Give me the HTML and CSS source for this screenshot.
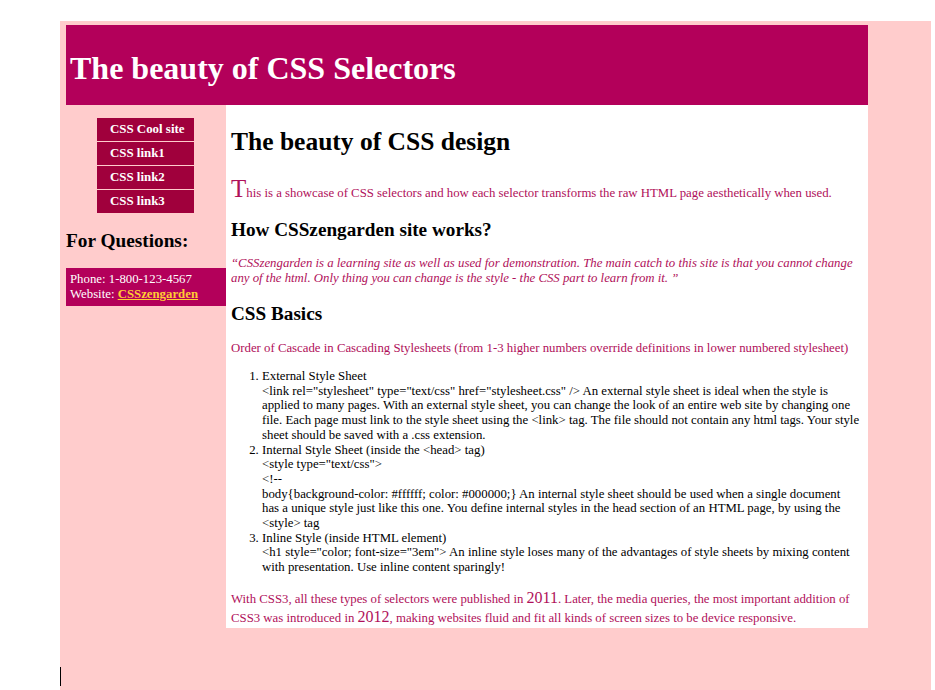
FILE: index.html
```html
<!DOCTYPE html>
<html>
<head>
<meta charset="utf-8">
<title>The beauty of CSS Selectors</title>
<link rel="stylesheet" href="styles.css">
</head>
<body>
<div class="page">
  <header class="masthead">
    <h1 class="site-title">The beauty of CSS Selectors</h1>
  </header>
  <div class="layout">
    <aside class="sidebar">
      <nav class="nav">
        <a class="nav-link" href="#">CSS Cool site</a>
        <a class="nav-link" href="#">CSS link1</a>
        <a class="nav-link" href="#">CSS link2</a>
        <a class="nav-link" href="#">CSS link3</a>
      </nav>
      <h2 class="side-heading">For Questions:</h2>
      <div class="contact">
        Phone: 1-800-123-4567<br>
        Website: <a class="contact-link" href="#">CSSzengarden</a>
      </div>
    </aside>
    <main class="content">
      <h1 class="content-title">The beauty of CSS design</h1>
      <p class="intro"><span class="dropcap">T</span>his is a showcase of CSS selectors and how each selector transforms the raw HTML page aesthetically when used.</p>
      <h2 class="section-title">How CSSzengarden site works?</h2>
      <p class="quote">“CSSzengarden is a learning site as well as used for demonstration. The main catch to this site is that you cannot change any of the html. Only thing you can change is the style - the CSS part to learn from it. ”</p>
      <h2 class="section-title">CSS Basics</h2>
      <p class="lead">Order of Cascade in Cascading Stylesheets (from 1-3 higher numbers override definitions in lower numbered stylesheet)</p>
      <ol class="cascade">
        <li>External Style Sheet<br>&lt;link rel="stylesheet" type="text/css" href="stylesheet.css" /&gt; An external style sheet is ideal when the style is applied to many pages. With an external style sheet, you can change the look of an entire web site by changing one file. Each page must link to the style sheet using the &lt;link&gt; tag. The file should not contain any html tags. Your style sheet should be saved with a .css extension.</li>
        <li>Internal Style Sheet (inside the &lt;head&gt; tag)<br>&lt;style type="text/css"&gt;<br>&lt;!--<br>body{background-color: #ffffff; color: #000000;} An internal style sheet should be used when a single document has a unique style just like this one. You define internal styles in the head section of an HTML page, by using the &lt;style&gt; tag</li>
        <li>Inline Style (inside HTML element)<br>&lt;h1 style="color; font-size="3em"&gt; An inline style loses many of the advantages of style sheets by mixing content with presentation. Use inline content sparingly!</li>
      </ol>
      <p class="closing">With CSS3, all these types of selectors were published in <span class="year">2011</span>. Later, the media queries, the most important addition of CSS3 was introduced in <span class="year">2012</span>, making websites fluid and fit all kinds of screen sizes to be device responsive.</p>
    </main>
  </div>
</div>
</body>
</html>
```

FILE: styles.css
```css
html, body {
  margin: 0;
  padding: 0;
  background: #ffffff;
}

body {
  font-family: "Liberation Serif", "Times New Roman", serif;
  font-size: 12.8px;
  color: #000000;
}

.page {
  position: relative;
  margin: 21px 0 0 60px;
  width: 871px;
  min-height: 669px;
  box-sizing: border-box;
  padding: 4px 63px 0 6px;
  background: #ffcccc;
}

.page::after {
  content: "";
  position: absolute;
  left: 0;
  top: 646px;
  width: 1px;
  height: 19px;
  background: #000000;
}

.masthead {
  height: 80px;
  background: #b3005a;
  display: flex;
  align-items: center;
  padding-left: 4px;
}

.site-title {
  margin: 6px 0 0 0;
  font-size: 32px;
  line-height: 36px;
  font-weight: bold;
  color: #ffffff;
}

.layout {
  display: flex;
  align-items: flex-start;
}

.sidebar {
  width: 160px;
  flex: none;
}

.nav {
  display: flex;
  flex-direction: column;
  width: 97px;
  margin: 13px 0 0 31px;
  gap: 1px;
}

.nav-link {
  display: block;
  height: 23px;
  line-height: 23px;
  padding-left: 13px;
  background: #a0003c;
  color: #ffffff;
  font-weight: bold;
  font-size: 12.9px;
  text-decoration: none;
}

.side-heading {
  margin: 17px 0 0 0;
  font-size: 19.3px;
  font-weight: bold;
  line-height: 22px;
}

.contact {
  margin-top: 16px;
  background: #b3005a;
  color: #ffffff;
  font-size: 12.8px;
  line-height: 15px;
  padding: 4px 4px 4px 4px;
}

.contact-link {
  color: #ffcc33;
  font-weight: bold;
}

.content {
  width: 642px;
  flex: none;
  box-sizing: border-box;
  background: #ffffff;
  padding: 1px 8px 0 5px;
}

.content-title {
  margin: 22px 0 0 0;
  font-size: 25.5px;
  line-height: 28px;
  font-weight: bold;
}

.intro {
  margin: 24px 0 0 0;
  color: #b0105a;
  line-height: 18px;
}

.dropcap {
  font-size: 25px;
  line-height: 18px;
}

.section-title {
  margin: 17px 0 0 0;
  font-size: 19.2px;
  line-height: 22px;
  font-weight: bold;
}

.quote {
  margin: 15px 0 0 0;
  font-style: italic;
  color: #b0105a;
  line-height: 15px;
}

.quote + .section-title {
  margin-top: 17px;
}

.lead {
  margin: 16px 0 0 0;
  color: #b0105a;
  line-height: 15px;
}

.cascade {
  margin: 13px 0 0 0;
  padding-left: 31px;
  line-height: 14.7px;
}

.closing {
  margin: 15px 0 0 0;
  color: #b0105a;
  line-height: 19px;
}

.year {
  font-size: 16px;
  line-height: 16px;
}
```
